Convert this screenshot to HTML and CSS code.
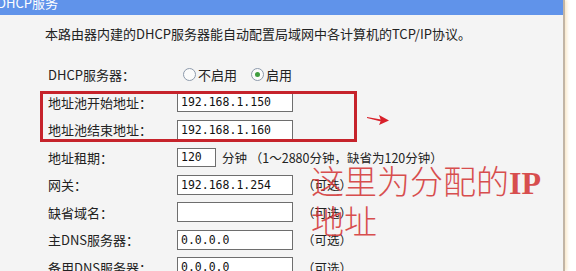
FILE: index.html
```html
<!DOCTYPE html>
<html lang="zh-CN">

<head>
    <meta charset="UTF-8">
    <meta name="viewport" content="width=device-width, initial-scale=1.0">
    <title>DHCP服务</title>
    <link rel="stylesheet" href="styles.css">
</head>

<body>
    <div class="frame">
        <div class="title-bar"><span>DHCP服务</span></div>
        <div class="panel">
            <p class="intro">本路由器内建的DHCP服务器能自动配置局域网中各计算机的TCP/IP协议。</p>
            <div class="form">
                <div class="label">DHCP服务器：</div>
                <div class="field">
                    <span class="radio"></span><span class="opt">不启用</span>
                    <span class="radio on"></span><span class="opt">启用</span>
                </div>

                <div class="label">地址池开始地址：</div>
                <div class="field"><span class="input">192.168.1.150</span></div>

                <div class="label">地址池结束地址：</div>
                <div class="field"><span class="input">192.168.1.160</span></div>

                <div class="label">地址租期：</div>
                <div class="field">
                    <span class="input short">120</span>
                    <span class="note unit">分钟 （1～2880分钟，缺省为120分钟）</span>
                </div>

                <div class="label">网关：</div>
                <div class="field"><span class="input">192.168.1.254</span><span class="note">（可选）</span></div>

                <div class="label">缺省域名：</div>
                <div class="field"><span class="input"></span><span class="note">（可选）</span></div>

                <div class="label">主DNS服务器：</div>
                <div class="field"><span class="input">0.0.0.0</span><span class="note">（可选）</span></div>

                <div class="label">备用DNS服务器：</div>
                <div class="field"><span class="input">0.0.0.0</span><span class="note">（可选）</span></div>
            </div>
        </div>
    </div>

    <!-- 标注 -->
    <div class="mark-box"></div>
    <svg class="mark-arrow" width="26" height="14" viewBox="0 0 26 14">
        <path d="M1 4 L15 6.5 L15 8.5 L1 5 Z" fill="#d8202a" />
        <path d="M13 2 L23 7.5 L13 12 L15 7.5 Z" fill="#d8202a" />
    </svg>
    <div class="mark-text">这里为分配的<b>IP</b><br>地址</div>
</body>

</html>
```

FILE: styles.css
```css
* {
    margin: 0;
    padding: 0;
}

body {
    background-color: #fff;
    font-family: "Noto Sans CJK SC", sans-serif;
    font-size: 13px;
    color: #222;
    position: relative;
    height: 271px;
    overflow: hidden;
}

.frame {
    width: 563px;
    height: 271px;
    background-color: #f4f4f4;
    border-right: 2px solid #c2b5a5;
    box-shadow: 2px 0 3px rgba(240, 205, 140, .45);
}

.title-bar {
    height: 15px;
    background-color: #6093ea;
    overflow: hidden;
}

.title-bar span {
    display: block;
    margin: -6px 0 0 -3px;
    line-height: 17px;
    font-size: 13px;
    color: #fff;
}

.panel {
    padding-top: 9px;
}

.intro {
    padding-left: 45px;
    line-height: 20px;
}

.form {
    margin-top: 17px;
    padding-left: 48px;
    display: grid;
    grid-template-columns: 129px 1fr;
    grid-auto-rows: 27.5px;
    align-items: center;
}

.field {
    display: flex;
    align-items: center;
}

.radio {
    width: 13px;
    height: 13px;
    box-sizing: border-box;
    border: 1px solid #8d9aab;
    border-radius: 50%;
    background-color: #fbfbfb;
    margin-left: 6px;
    display: flex;
    align-items: center;
    justify-content: center;
}

.radio.on::after {
    content: "";
    width: 5px;
    height: 5px;
    border-radius: 50%;
    background-color: #3f9d3f;
}

.opt {
    margin-left: 2px;
    margin-right: 8px;
}

.input {
    width: 116px;
    height: 20px;
    box-sizing: border-box;
    border: 1px solid #6e6e6e;
    background-color: #fff;
    padding-left: 3px;
    font-family: "DejaVu Sans Mono", monospace;
    font-size: 11.5px;
    line-height: 18px;
    color: #111;
}

.input.short {
    width: 39px;
    height: 19px;
    line-height: 17px;
}

.note {
    margin-left: 9px;
    font-size: 12.5px;
}

.note.unit {
    margin-left: 6px;
}

.mark-box {
    position: absolute;
    left: 40px;
    top: 91px;
    width: 317px;
    height: 51px;
    box-sizing: border-box;
    border: 3px solid #c6232b;
}

.mark-arrow {
    position: absolute;
    left: 366px;
    top: 113px;
}

.mark-text {
    position: absolute;
    left: 311px;
    top: 162px;
    font-size: 33px;
    font-weight: 300;
    line-height: 37px;
    color: #d43838;
    opacity: .88;
}

.mark-text b {
    font-family: "Liberation Serif", serif;
    font-weight: bold;
    font-size: 32px;
}
```
